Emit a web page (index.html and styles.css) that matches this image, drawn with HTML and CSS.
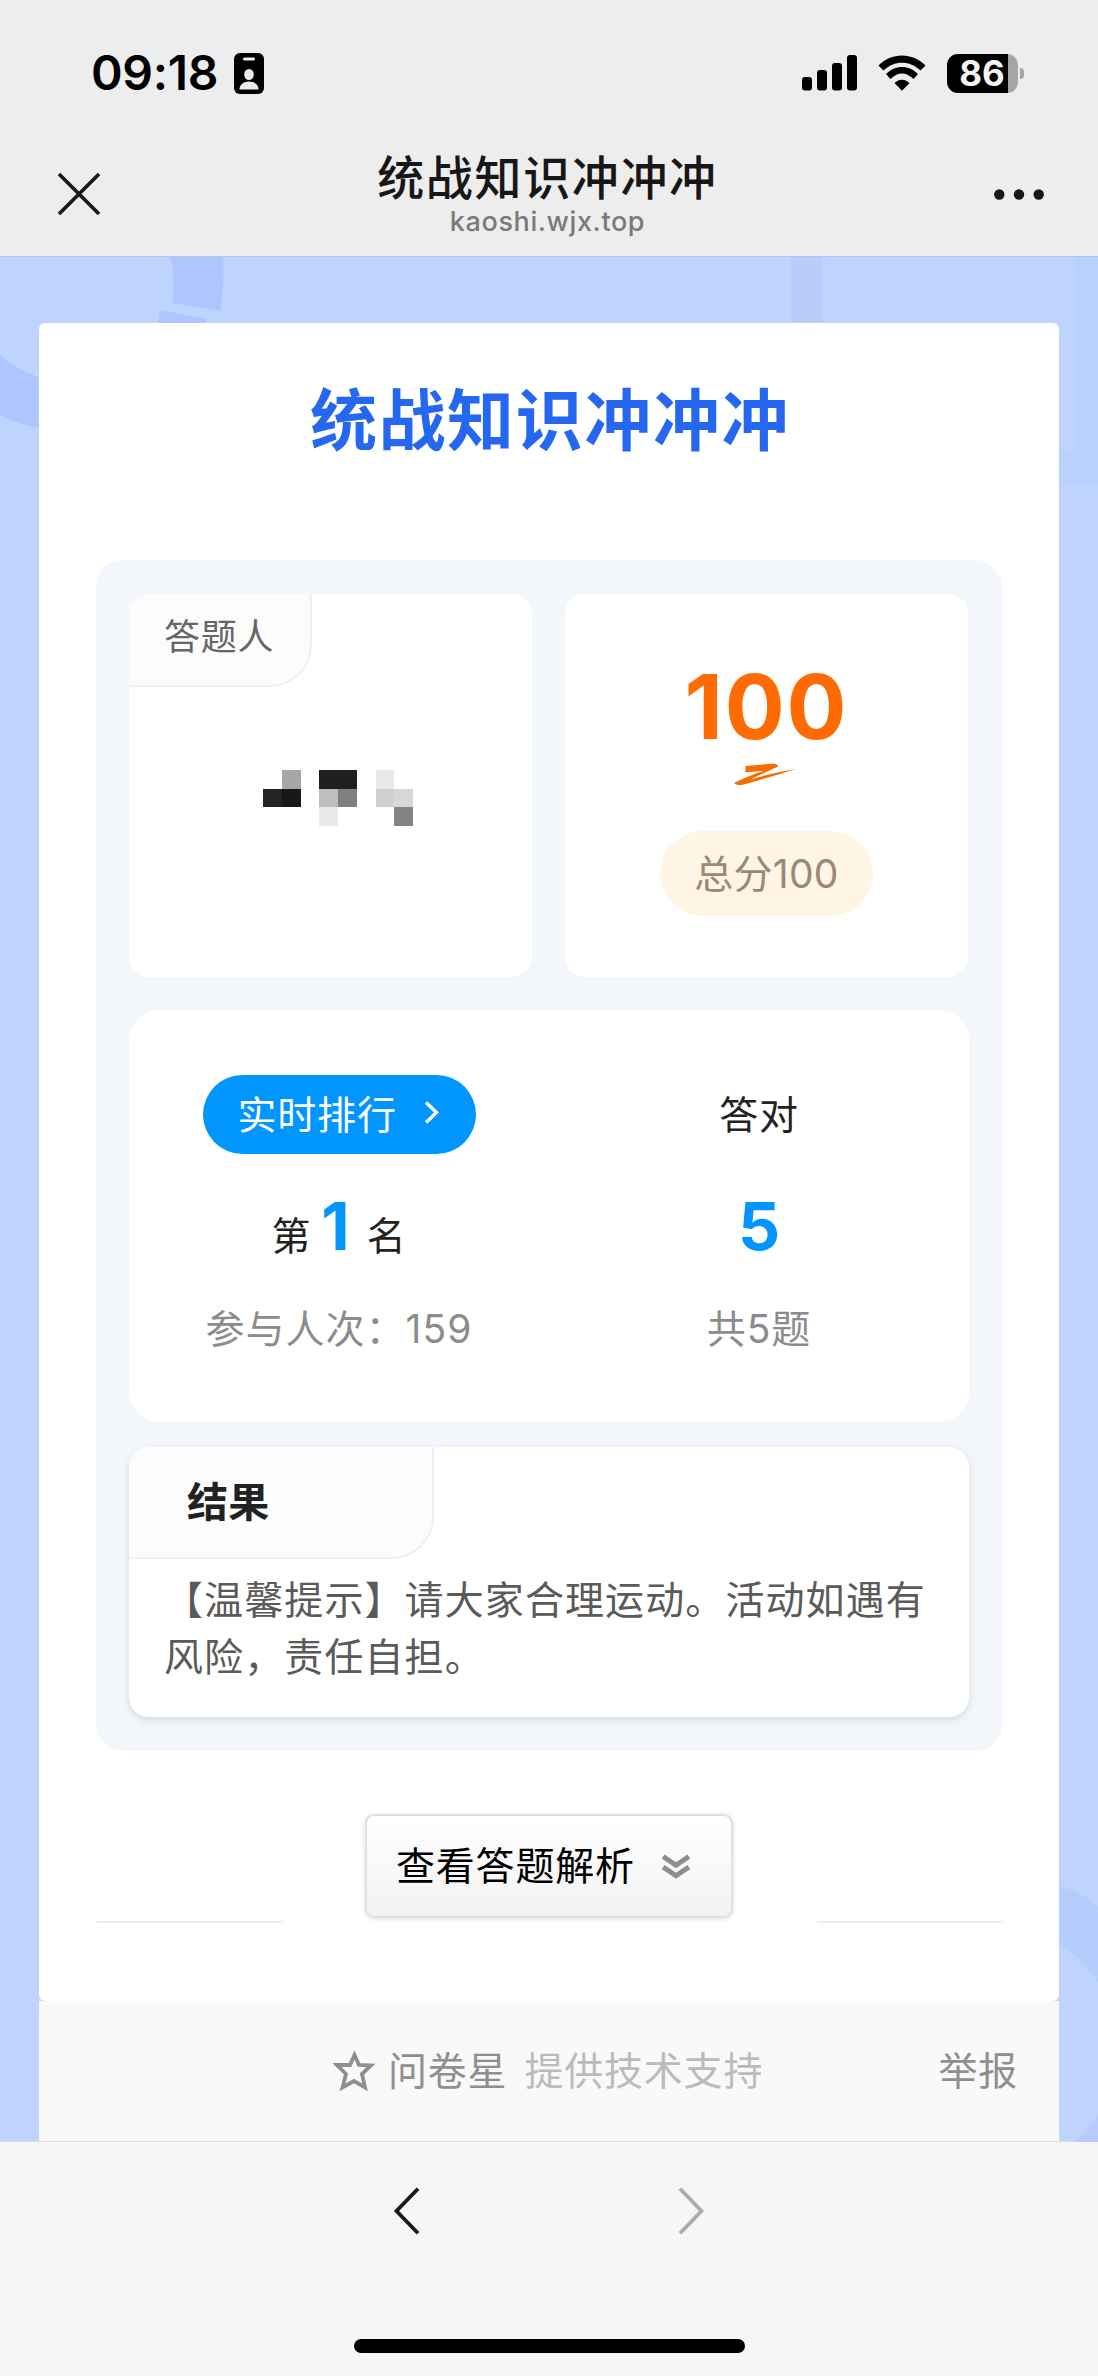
FILE: index.html
```html
<!DOCTYPE html>
<html lang="zh-CN">
<head>
<meta charset="utf-8">
<title>统战知识冲冲冲</title>
<link rel="stylesheet" href="styles.css">
</head>
<body>
<header class="top">
  <div class="status">
    <div class="status-left">
      <span class="time">09:18</span>
      <svg class="badge" width="30" height="41" viewBox="0 0 30 41"><rect width="30" height="41" rx="6"/><rect x="9" y="4.500" width="12" height="3" rx="1.500" fill="#ececec"/><ellipse cx="15" cy="21.500" rx="4.800" ry="5.500" fill="#ececec"/><path d="M5.500 36.500c0-5 4-8 9.500-8s9.500 3 9.500 8z" fill="#ececec"/></svg>
    </div>
    <div class="status-right">
      <svg width="55" height="36" viewBox="0 0 55 36"><rect y="22" width="10" height="13.500" rx="3"/><rect x="15" y="15" width="10" height="20.500" rx="3"/><rect x="30" y="8" width="10" height="27.500" rx="3"/><rect x="45" width="10" height="35.500" rx="3"/></svg>
      <svg width="48" height="36" viewBox="0 0 48 36"><path d="M0.500 10.500C13-3 35-3 47.500 10.500L42.500 15.500C32 5 16 5 5.500 15.500z"/><path d="M8 19C17 9.500 31 9.500 40 19L35.500 24C28.500 16.500 19.500 16.500 12.500 24z"/><path d="M16.500 28C21 23.500 27 23.500 31.500 28L24 35.800z"/></svg>
      <div class="battery"><span class="battery-level">86</span></div>
    </div>
  </div>
  <div class="navbar">
    <svg class="close" width="44" height="44" viewBox="0 0 44 44" fill="none" stroke="#171717" stroke-width="3.600"><path d="M2 2L42 42M42 2L2 42"/></svg>
    <div class="heading">
      <div class="heading-title">统战知识冲冲冲</div>
      <div class="heading-host">kaoshi.wjx.top</div>
    </div>
    <svg class="more" width="50" height="11" viewBox="0 0 50 11" fill="#171717"><circle cx="5.300" cy="5.500" r="5.200"/><circle cx="25" cy="5.500" r="5.200"/><circle cx="44.700" cy="5.500" r="5.200"/></svg>
  </div>
</header>

<main class="page">
  <svg class="pattern" width="1098" height="1885" viewBox="0 256 1098 1885">
    <path fill="#adc6ff" d="M171 256H223.500Q224 290 220 310L173 302Q175 280 171 256zM160 309L207 318L205 324H157zM0 354Q18 370 39 376V427Q18 424 0 414z"/>
    <path fill="#b9cdfd" d="M791 256H822V324H791z"/>
    <path fill="#b9d1ff" d="M1075 256H1098V483H1059V450H1075z"/>
    <path fill="#b4cdff" d="M1059 1885Q1080 1890 1098 1905V1982Q1080 1953 1059 1943z"/>
    <path fill="#b8caff" d="M1098 2114V2141H1074Q1088 2130 1098 2114z"/>
  </svg>
  <section class="sheet">
    <h1 class="title">统战知识冲冲冲</h1>
    <div class="panel">
      <div class="pair">
        <div class="card person">
          <div class="tab">答题人</div>
          <svg class="mosaic" width="150" height="56" viewBox="0 0 8 3" preserveAspectRatio="none" shape-rendering="crispEdges">
            <rect x="1" width="1" height="1" fill="#a6a6a6"/><rect y="1" width="1" height="1" fill="#232323"/><rect x="1" y="1" width="1" height="1" fill="#181818"/>
            <rect x="3" width="2" height="1" fill="#1f1f1f"/><rect x="3" y="1" width="1" height="1" fill="#bebebe"/><rect x="4" y="1" width="1" height="1" fill="#808080"/><rect x="3" y="2" width="1" height="1" fill="#e8e8e8"/>
            <rect x="6" width="1" height="1" fill="#e9e9e9"/><rect x="6" y="1" width="1" height="1" fill="#d0d0d0"/><rect x="7" y="1" width="1" height="1" fill="#d7d7d7"/><rect x="7" y="2" width="1" height="1" fill="#838383"/>
          </svg>
        </div>
        <div class="card score">
          <div class="score-value">100</div>
          <svg class="swoosh" width="62" height="23" viewBox="0 0 62 23" fill="#f56c00"><path d="M11.500 3L40 .5Q43.500 1 44 3.500L16 16.500Q34 11 61.500 6Q44 12 8 22Q2 22.300 0 20Q18 11.500 30 7.800L11.500 9.500z"/></svg>
          <div class="score-total">总分100</div>
        </div>
      </div>
      <div class="card stats">
        <div class="stat">
          <div class="rank-button"><span>实时排行</span><svg width="16" height="23" viewBox="0 0 16 23" fill="none" stroke="#fff" stroke-width="3.400"><path d="M2 1.500L12.500 11.500L2 21.500"/></svg></div>
          <div class="stat-main"><span>第</span><b class="rank">1</b><span>名</span></div>
          <div class="stat-note">参与人次：159</div>
        </div>
        <div class="stat">
          <div class="stat-label">答对</div>
          <div class="stat-main"><b>5</b></div>
          <div class="stat-note">共5题</div>
        </div>
      </div>
      <div class="card result">
        <div class="tab tab-large">结果</div>
        <p class="result-text">【温馨提示】请大家合理运动。活动如遇有风险，责任自担。</p>
      </div>
    </div>
    <div class="actions">
      <div class="rule"></div>
      <div class="analysis"><span>查看答题解析</span><svg width="28" height="25" viewBox="0 0 28 25" fill="none" stroke="#8e8e8e" stroke-width="5"><path d="M1.200 2.500L14 11.200L26.800 2.500M1.200 13L14 21.700L26.800 13"/></svg></div>
      <div class="rule"></div>
    </div>
  </section>
  <footer class="support">
    <svg class="star" width="42" height="43" viewBox="0 0 42 43" fill="none" stroke="#8f8f8f" stroke-width="3.800"><path d="M21.500 6L26 16L38 16.500L29 25L32 38.500L21 32L9.500 38.500L13 25L4 16L17 16z"/></svg>
    <span class="brand">问卷星</span>
    <span class="tagline">提供技术支持</span>
    <span class="report">举报</span>
  </footer>
</main>

<nav class="toolbar">
  <div class="toolbar-buttons">
    <svg width="27" height="48" viewBox="0 0 27 48" fill="none" stroke="#1a1a1a" stroke-width="3.800"><path d="M25 1.800L3.500 24L25 46.200"/></svg>
    <svg width="27" height="48" viewBox="0 0 27 48" fill="none" stroke="#acacac" stroke-width="3.800"><path d="M2 1.800L23.500 24L2 46.200"/></svg>
  </div>
  <div class="home"></div>
</nav>
</body>
</html>
```
FILE: styles.css
```css
* { box-sizing: border-box; }
body {
  margin: 0;
  width: 1098px;
  height: 2376px;
  overflow: hidden;
  font-family: Inter, "Noto Sans CJK SC", sans-serif;
  font-size: 39px;
  line-height: 56px;
  letter-spacing: 0.8px;
  color: #222;
  display: flex;
  flex-direction: column;
}
svg { display: block; flex: none; }

.top { height: 257px; background: #ededed; border-bottom: 1px solid #b9c3da; }
.status { height: 146px; padding: 0 80px 0 91px; display: flex; justify-content: space-between; align-items: center; }
.status-left, .status-right { display: flex; align-items: center; }
.status-left { gap: 15px; }
.time { font-size: 48px; font-weight: 600; line-height: 60px; letter-spacing: -0.3px; color: #000; width: 128px; white-space: nowrap; }
.status-right { gap: 21px; }
.battery {
  position: relative;
  width: 71px;
  height: 39px;
  border-radius: 11px;
  background: linear-gradient(to right, #000 61px, #a5a5a5 61px);
}
.battery::after {
  content: "";
  position: absolute;
  left: 73px;
  top: 14px;
  width: 4px;
  height: 11px;
  border-radius: 0 4px 4px 0;
  background: #a5a5a5;
}
.battery-level { display: block; width: 70px; text-align: center; font-size: 35px; font-weight: 700; line-height: 39px; letter-spacing: 0; color: #f4f4f4; }
.navbar { height: 110px; padding: 0 54px 0 57px; display: flex; justify-content: space-between; align-items: center; }
.close { margin-top: -14px; }
.more { margin-top: -14px; }
.heading { text-align: center; margin-top: -12px; }
.heading-title { font-size: 47px; font-weight: 500; line-height: 52px; letter-spacing: 1.65px; color: #171717; }
.heading-host { margin-top: 2px; font-size: 27px; font-weight: 500; line-height: 32px; letter-spacing: 0.6px; color: #7a7a7a; }

.page { position: relative; height: 1884px; padding: 66px 39px 0; background: #bfd3ff; }
.pattern { position: absolute; left: 0; top: 0; }
.sheet { position: relative; height: 1678px; padding: 0 57px; background: #fff; border-radius: 6px; display: flex; flex-direction: column; }
.title { margin: 63px 0 0 2px; text-align: center; font-size: 67px; font-weight: 700; line-height: 70px; letter-spacing: 1.6px; color: #2567ef; }
.panel { margin: 104px 0 0; height: 1191px; padding: 34px 33px 33px; background: #f3f7fb; border-radius: 27px; display: flex; flex-direction: column; }
.card { background: #fff; border-radius: 20px; }
.pair { display: grid; grid-template-columns: 403px 403px; gap: 33px; height: 383px; }
.person { overflow: hidden; }
.tab {
  width: 183px;
  height: 93px;
  padding: 0 0 6px 35px;
  display: flex;
  align-items: center;
  font-size: 36px;
  color: #666;
  background: #fcfcfd;
  border: solid #efeff1;
  border-width: 0 2px 2px 0;
  border-radius: 0 0 42px 0;
}
.mosaic { margin: 83px 0 0 134px; }
.score { display: flex; flex-direction: column; align-items: center; padding-top: 68px; }
.score-value { font-size: 89px; font-weight: 700; line-height: 90px; letter-spacing: 1.8px; color: #ff6b00; }
.swoosh { margin: 11px 4px 0 0; }
.score-total { margin-top: 45px; width: 213px; height: 85px; border-radius: 43px; background: #fff5e5; color: #9b8877; text-align: center; line-height: 85px; letter-spacing: 0.3px; }
.stats { margin-top: 33px; height: 412px; border-radius: 30px; display: grid; grid-template-columns: 1fr 1fr; }
.stat { display: flex; flex-direction: column; align-items: center; padding-top: 65px; }
.rank-button { width: 273px; height: 79px; padding: 0 36px 0 35px; border-radius: 40px; background: #0095ff; color: #fff; display: flex; align-items: center; justify-content: space-between; }
.rank-button svg { margin-top: -4px; }
.stat-label { height: 79px; line-height: 79px; }
.stat-main { margin-top: 36px; height: 80px; line-height: 72px; display: flex; align-items: baseline; gap: 13px; }
.stat-main b { font-size: 66px; letter-spacing: 0; color: #0095ff; }
.stat-main .rank { margin: 0 4px 0 -3px; }
.stat-note { margin-top: 30px; height: 60px; line-height: 58px; color: #8c8c8c; letter-spacing: 1px; }
.result { margin-top: 25px; height: 270px; box-shadow: 0 3px 7px rgba(60, 90, 90, 0.18); overflow: hidden; }
.tab-large { width: 305px; height: 112px; padding: 0 0 0 58px; font-size: 41px; font-weight: 700; letter-spacing: 0.3px; color: #222; }
.result-text { margin: 12px 32px 0 35px; line-height: 57px; letter-spacing: 1.1px; color: #5a5a5a; text-spacing-trim: space-all; }
.actions { margin: 63px -4px 0; display: flex; justify-content: space-between; align-items: flex-end; }
.rule { width: 193px; height: 2px; margin-bottom: -5px; background: linear-gradient(to right, #fff, #ececec 4%, #ececec 96%, #fff); }
.analysis { width: 368px; height: 104px; padding: 0 41px 0 29px; display: flex; align-items: center; justify-content: space-between; color: #000; background: linear-gradient(#fff, #f2f2f2); border: 2px solid #e0e0e0; border-radius: 9px; box-shadow: 0 1px 4px rgba(0, 0, 0, 0.14); }
.support { position: relative; height: 140px; padding: 0 41px 0 294px; background: #f9f9f9; display: flex; align-items: center; color: #8f8f8f; }
.star { margin-top: -1px; }
.brand { margin-left: 13px; }
.tagline { margin-left: 17px; color: #bbb; }
.report { margin-left: auto; }

.toolbar { height: 235px; background: #f6f6f7; border-top: 1px solid #dcdcdf; display: flex; flex-direction: column; align-items: center; }
.toolbar-buttons { width: 312px; margin-top: 45px; display: flex; justify-content: space-between; }
.home { width: 391px; height: 14px; margin-top: 104px; border-radius: 7px; background: #000; }
```
